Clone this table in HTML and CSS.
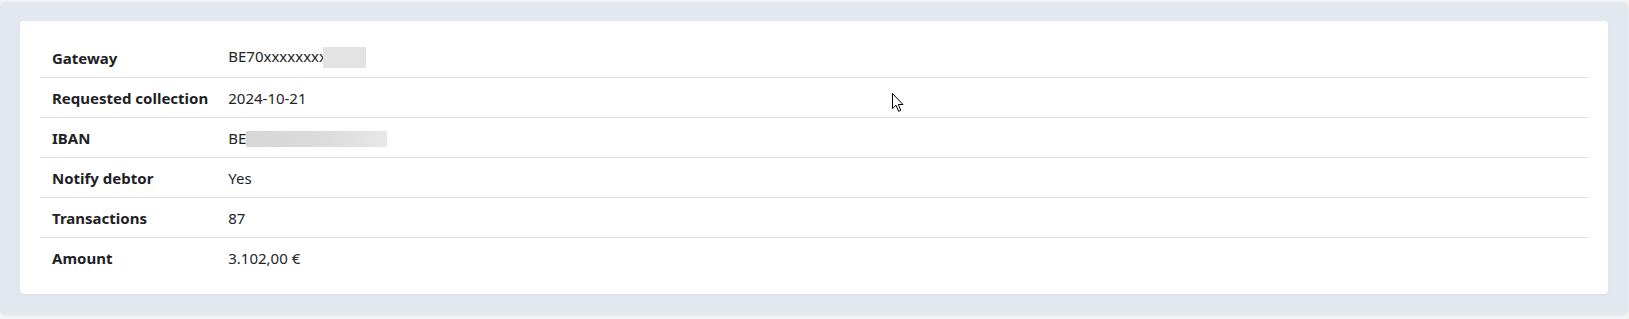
FILE: index.html
```html
<!DOCTYPE html>
<html>
<head>
<meta charset="utf-8">
<link rel="stylesheet" href="styles.css">
</head>
<body>
<div class="panel">
  <div class="card">
    <table class="details">
      <tr><th>Gateway</th><td>BE70xxxxxxxx<span class="redact redact-a"></span></td></tr>
      <tr><th>Requested collection</th><td>2024-10-21</td></tr>
      <tr><th>IBAN</th><td>BE<span class="redact redact-b"></span></td></tr>
      <tr><th>Notify debtor</th><td>Yes</td></tr>
      <tr><th>Transactions</th><td>87</td></tr>
      <tr><th>Amount</th><td>3.102,00 €</td></tr>
    </table>
  </div>
</div>
<svg class="cursor" width="13" height="20" viewBox="0 0 13 20"><path d="M0.5 0.5 L0.5 15.5 L4 12.2 L6.6 18.3 L8.8 17.4 L6.3 11.5 L11 11.5 Z" fill="#fff" stroke="#000" stroke-width="1" stroke-linejoin="miter"/></svg>
</body>
</html>
```

FILE: styles.css
```css
html, body {
  margin: 0;
  background: #f1f3f6;
}
body {
  font-family: "Noto Sans", "Open Sans", sans-serif;
  font-size: 15px;
  color: #212529;
  padding: 2px 1px 5px 0;
  position: relative;
}
.panel {
  background: #e2e8f0;
  border-radius: 6px;
  padding: 19px 20px 20px 20px;
  box-shadow: 0 1px 3px rgba(0,0,0,0.08);
}
.card {
  background: #fff;
  border-radius: 4px;
  padding: 17px 19px 16px 20px;
  box-shadow: 0 1px 2px rgba(0,0,0,0.06);
}
.details {
  width: 100%;
  border-collapse: collapse;
}
.details th, .details td {
  height: 39px;
  padding: 0 12px;
  text-align: left;
  vertical-align: middle;
  border-bottom: 1px solid #dee2e6;
  line-height: 20px;
}
.details tr:last-child th, .details tr:last-child td {
  border-bottom-color: transparent;
}
.details th {
  width: 1%;
  white-space: nowrap;
  font-weight: 700;
  color: #1e2125;
  padding-right: 8px;
}
.redact {
  display: inline-block;
  vertical-align: middle;
}
.redact-a {
  width: 43px;
  height: 21px;
  background: #e3e3e3;
  margin-left: -4px;
  position: relative;
  top: -1px;
}
.redact-b {
  width: 141px;
  height: 16px;
  background: linear-gradient(90deg, #d6d6d6, #dcdcdc 60%, #e8e8e8);
}
.cursor {
  position: absolute;
  left: 892px;
  top: 93px;
}
```
